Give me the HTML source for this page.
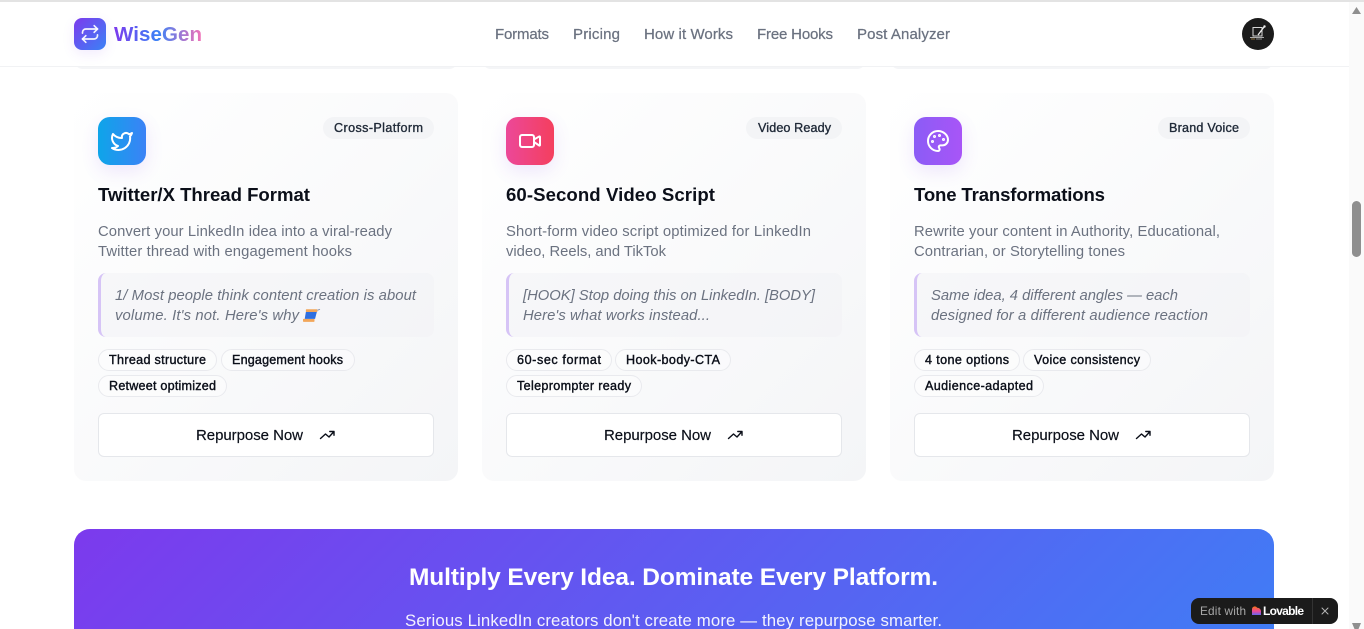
<!DOCTYPE html>
<html lang="en">
<head>
<meta charset="utf-8">
<title>WiseGen</title>
<style>
html,body{margin:0;padding:0;width:1364px;height:629px;overflow:hidden;background:#fff}
#page{position:relative;width:1364px;height:629px;overflow:hidden;background:#fff}
.a{position:absolute;box-sizing:border-box}
#top{left:0;top:0;width:1364px;height:2px;background:#e3e3e3;z-index:5}
#strip1,#strip2,#strip3{top:60px;height:9px;background:#f4f5f7;border-radius:0 0 12px 12px;width:384px}
#hdr{left:0;top:0;width:1349px;height:67px;background:#fff;border-bottom:1px solid #f1f2f4}
.card{top:93px;width:384px;height:388px;border-radius:12px;background:linear-gradient(135deg,#fff 0%,#f4f5f7 100%)}
.ico{top:117px;width:48px;height:48px;border-radius:12px;box-shadow:0 6px 18px rgba(124,58,237,.12)}
.badge{top:117px;height:22px;border-radius:11px;background:#f3f4f6}
.quote{top:273px;width:336px;height:64px;background:rgba(241,242,246,.5);border-left:3px solid #d6c4f6;border-radius:8px}
.chip{height:22px;border-radius:11px;border:1px solid #e9eaee;background:rgba(255,255,255,.35)}
.btn{top:413px;width:336px;height:44px;background:#fff;border:1px solid #e5e7eb;border-radius:6px}
#cta{left:74px;top:529px;width:1200px;height:100px;border-radius:16px 16px 0 0;background:linear-gradient(135deg,#7c3aed 0%,#3b82f6 100%) 0 0/1200px 220px no-repeat}
#sb{left:1349px;top:2px;width:15px;height:627px;background:#fafafa;z-index:4}
#thumb{left:1352px;top:201px;width:9px;height:56px;border-radius:5px;background:#8f8f8f;z-index:6}
#lov{left:1191px;top:598px;width:147px;height:26px;border-radius:8px;background:#1b1b1b;z-index:7}
#ov{position:absolute;left:0;top:0;z-index:8;display:block}
text{font-family:"Liberation Sans",Arial,sans-serif;white-space:pre}
.nav{font-size:15px;fill:#6b7280;stroke:#6b7280;stroke-width:.25}
.bd{font-size:12.6px;fill:#1f2937;stroke:#1f2937;stroke-width:.35}
.ti{font-size:18.6px;font-weight:700;fill:#0b0f19}
.de{font-size:14.8px;fill:#6b7280}
.qu{font-size:14.8px;font-style:italic;fill:#6b7280}
.ch{font-size:12.6px;fill:#0b0f19;stroke:#0b0f19;stroke-width:.38}
.bt{font-size:15px;fill:#0b0f19;stroke:#0b0f19;stroke-width:.18}
</style>
</head>
<body>
<div id="page">
<div class="a" id="strip1" style="left:74px"></div>
<div class="a" id="strip2" style="left:482px"></div>
<div class="a" id="strip3" style="left:890px"></div>
<div class="a" id="hdr"></div>
<div class="a" id="top"></div>

<div class="a" style="left:74px;top:18px;width:32px;height:32px;border-radius:8px;background:linear-gradient(135deg,#7c3aed,#3b82f6);box-shadow:0 4px 12px rgba(124,58,237,.1)"></div>
<div class="a" style="left:1242px;top:18px;width:32px;height:32px;border-radius:50%;background:#1b1b1b"></div>

<div class="a card" style="left:74px"></div>
<div class="a card" style="left:482px"></div>
<div class="a card" style="left:890px"></div>

<div class="a ico" style="left:98px;background:linear-gradient(90deg,#0ea5e9,#3b82f6)"></div>
<div class="a ico" style="left:506px;background:linear-gradient(90deg,#ec4899,#f43f5e)"></div>
<div class="a ico" style="left:914px;background:linear-gradient(90deg,#8b5cf6,#a855f7)"></div>

<div class="a badge" style="left:323px;width:111px"></div>
<div class="a badge" style="left:746px;width:96px"></div>
<div class="a badge" style="left:1158px;width:92px"></div>

<div class="a quote" style="left:98px"></div>
<div class="a quote" style="left:506px"></div>
<div class="a quote" style="left:914px"></div>

<div class="a chip" style="left:98px;top:349px;width:119px"></div>
<div class="a chip" style="left:221px;top:349px;width:134px"></div>
<div class="a chip" style="left:98px;top:375px;width:129px"></div>
<div class="a chip" style="left:506px;top:349px;width:106px"></div>
<div class="a chip" style="left:615px;top:349px;width:116px"></div>
<div class="a chip" style="left:506px;top:375px;width:136px"></div>
<div class="a chip" style="left:914px;top:349px;width:106px"></div>
<div class="a chip" style="left:1023px;top:349px;width:128px"></div>
<div class="a chip" style="left:914px;top:375px;width:130px"></div>

<div class="a btn" style="left:98px"></div>
<div class="a btn" style="left:506px"></div>
<div class="a btn" style="left:914px"></div>

<div class="a" id="cta"></div>
<div class="a" id="sb"></div>
<div class="a" id="thumb"></div>
<div class="a" id="lov"></div>

<svg id="ov" width="1364" height="629" viewBox="0 0 1364 629" xmlns="http://www.w3.org/2000/svg">
<defs>
<linearGradient id="lg" gradientUnits="userSpaceOnUse" x1="114" y1="0" x2="202" y2="0">
<stop offset="0" stop-color="#7c3aed"/><stop offset=".5" stop-color="#3b82f6"/><stop offset="1" stop-color="#f472b6"/>
</linearGradient>
<linearGradient id="hg" x1="0" y1="0" x2="0" y2="1">
<stop offset="0" stop-color="#f97316"/><stop offset=".55" stop-color="#ec4899"/><stop offset="1" stop-color="#6366f1"/>
</linearGradient>
<g id="tr" fill="none" stroke="#0b0f19" stroke-width="1.4" stroke-linecap="round" stroke-linejoin="round">
<path d="M1.5 12.5 6.5 8l3.5 3L15 5.5M10.8 5.5H15v3.8"/>
</g>
</defs>

<!-- scrollbar arrows -->
<path d="M1352 14 1356.500 7 1361 14Z" fill="#8f8f8f"/>
<path d="M1352 623 1361 623 1358.500 629 1354.500 629Z" fill="#8f8f8f"/>

<!-- logo -->
<g transform="translate(80 24) scale(.833)" fill="none" stroke="#fff" stroke-opacity=".92" stroke-width="2" stroke-linecap="round" stroke-linejoin="round">
<path d="m17 2 4 4-4 4"/><path d="M3 11v-1a4 4 0 0 1 4-4h14"/><path d="m7 22-4-4 4-4"/><path d="M21 13v1a4 4 0 0 1-4 4H3"/>
</g>
<text x="114" y="41" font-size="20.5" font-weight="700" fill="url(#lg)" textLength="88">WiseGen</text>

<!-- nav -->
<text class="nav" x="495" y="39" textLength="54">Formats</text>
<text class="nav" x="573" y="39" textLength="47">Pricing</text>
<text class="nav" x="644" y="39" textLength="89">How it Works</text>
<text class="nav" x="757" y="39" textLength="76">Free Hooks</text>
<text class="nav" x="857" y="39" textLength="93">Post Analyzer</text>

<!-- avatar -->
<g fill="none" stroke="#d8d8d8" stroke-width="1">
<path d="M1253 27.500h9v8.500h-9z"/>
<path d="M1250 37.500h14" stroke="#aaa"/>
<path d="M1258 35l6-8" stroke="#eee" stroke-width="1.3"/>
<circle cx="1264.500" cy="26.500" r="1.200" fill="#eee" stroke="none"/>
<path d="M1251 39h4" stroke="#8a6d3b"/><path d="M1256 39h6" stroke="#888"/>
</g>

<!-- card icons -->
<g transform="translate(110 129)" fill="none" stroke="#fff" stroke-width="2" stroke-linecap="round" stroke-linejoin="round">
<path d="M22 4s-.7 2.1-2 3.4c1.6 10-9.4 17.3-18 11.6 2.2.1 4.4-.6 6-2C3 15.5.5 9.6 3 5c2.2 2.6 5.6 4.1 9 4-.9-4.2 4-6.6 7-3.8 1.1 0 3-1.2 3-1.2z"/>
</g>
<g transform="translate(518 129)" fill="none" stroke="#fff" stroke-width="2" stroke-linecap="round" stroke-linejoin="round">
<path d="m16 13 5.223 3.482a.5.5 0 0 0 .777-.416V7.87a.5.5 0 0 0-.752-.432L16 10.5"/><rect x="2" y="6" width="14" height="12" rx="2"/>
</g>
<g transform="translate(926 129)" fill="none" stroke="#fff" stroke-width="2" stroke-linecap="round" stroke-linejoin="round">
<circle cx="13.5" cy="6.5" r=".5" fill="#fff"/><circle cx="17.5" cy="10.5" r=".5" fill="#fff"/><circle cx="8.5" cy="7.5" r=".5" fill="#fff"/><circle cx="6.5" cy="12.5" r=".5" fill="#fff"/>
<path d="M12 2C6.5 2 2 6.5 2 12s4.5 10 10 10c.926 0 1.648-.746 1.648-1.688 0-.437-.18-.835-.437-1.125-.29-.289-.438-.652-.438-1.125a1.64 1.64 0 0 1 1.668-1.668h1.996c3.051 0 5.555-2.503 5.555-5.554C21.965 6.012 17.461 2 12 2z"/>
</g>

<!-- badges -->
<text class="bd" x="334" y="132" textLength="89">Cross-Platform</text>
<text class="bd" x="758" y="132" textLength="73">Video Ready</text>
<text class="bd" x="1169" y="132" textLength="70">Brand Voice</text>

<!-- titles -->
<text class="ti" x="98" y="201" textLength="212">Twitter/X Thread Format</text>
<text class="ti" x="506" y="201" textLength="209">60-Second Video Script</text>
<text class="ti" x="914" y="201" textLength="191">Tone Transformations</text>

<!-- descriptions -->
<text class="de" x="98" y="236" textLength="294">Convert your LinkedIn idea into a viral-ready</text>
<text class="de" x="98" y="256" textLength="254">Twitter thread with engagement hooks</text>
<text class="de" x="506" y="236" textLength="305">Short-form video script optimized for LinkedIn</text>
<text class="de" x="506" y="256" textLength="160">video, Reels, and TikTok</text>
<text class="de" x="914" y="236" textLength="306">Rewrite your content in Authority, Educational,</text>
<text class="de" x="914" y="256" textLength="211">Contrarian, or Storytelling tones</text>

<!-- quotes -->
<text class="qu" x="115" y="300" textLength="301">1/ Most people think content creation is about</text>
<text class="qu" x="115" y="320" textLength="184">volume. It's not. Here's why</text>
<g transform="translate(303 308.500) scale(1.150)">
<rect x="0" y="9" width="10" height="2.600" fill="#f2a65a" rx=".6"/>
<rect x="2.500" y=".6" width="10" height="2.600" fill="#f2a65a" rx=".6"/>
<path d="M2.500 3h9.500l-1.500 6H1.500z" fill="#2f6fe0"/>
<path d="M12.500 1.500c1.200-.4 1.800-.4 2.200-1" stroke="#7c8aa5" stroke-width=".7" fill="none"/>
</g>
<text class="qu" x="523" y="300" textLength="292">[HOOK] Stop doing this on LinkedIn. [BODY]</text>
<text class="qu" x="523" y="320" textLength="187">Here's what works instead...</text>
<text class="qu" x="931" y="300" textLength="247">Same idea, 4 different angles — each</text>
<text class="qu" x="931" y="320" textLength="277">designed for a different audience reaction</text>

<!-- chips -->
<text class="ch" x="109" y="364" textLength="97">Thread structure</text>
<text class="ch" x="232" y="364" textLength="111">Engagement hooks</text>
<text class="ch" x="109" y="390" textLength="107">Retweet optimized</text>
<text class="ch" x="517" y="364" textLength="84">60-sec format</text>
<text class="ch" x="626" y="364" textLength="94">Hook-body-CTA</text>
<text class="ch" x="517" y="390" textLength="114">Teleprompter ready</text>
<text class="ch" x="925" y="364" textLength="84">4 tone options</text>
<text class="ch" x="1034" y="364" textLength="106">Voice consistency</text>
<text class="ch" x="925" y="390" textLength="108">Audience-adapted</text>

<!-- buttons -->
<text class="bt" x="196" y="440" textLength="107">Repurpose Now</text>
<text class="bt" x="604" y="440" textLength="107">Repurpose Now</text>
<text class="bt" x="1012" y="440" textLength="107">Repurpose Now</text>
<use href="#tr" x="319" y="426"/>
<use href="#tr" x="727" y="426"/>
<use href="#tr" x="1135" y="426"/>

<!-- CTA -->
<text x="409" y="585" font-size="24.500" font-weight="700" fill="#fff" textLength="529">Multiply Every Idea. Dominate Every Platform.</text>
<text x="405" y="626" font-size="16.800" fill="#fff" fill-opacity=".92" textLength="537">Serious LinkedIn creators don't create more — they repurpose smarter.</text>

<!-- Lovable badge -->
<text x="1200" y="615" font-size="11.800" fill="#a8a8a8" textLength="46">Edit with</text>
<path d="M1252 615v-6a2.800 2.800 0 0 1 5.200-1.200 3.600 3.600 0 0 1 3.800 3.600V615z" fill="url(#hg)"/>
<text x="1263" y="615" font-size="12" font-weight="700" fill="#fff" textLength="41">Lovable</text>
<path d="M1312.500 598v26" stroke="#333" stroke-width="1"/>
<path d="M1322 608l6 6M1328 608l-6 6" stroke="#b5b5b5" stroke-width="1" stroke-linecap="round"/>
</svg>
</div>
</body>
</html>
